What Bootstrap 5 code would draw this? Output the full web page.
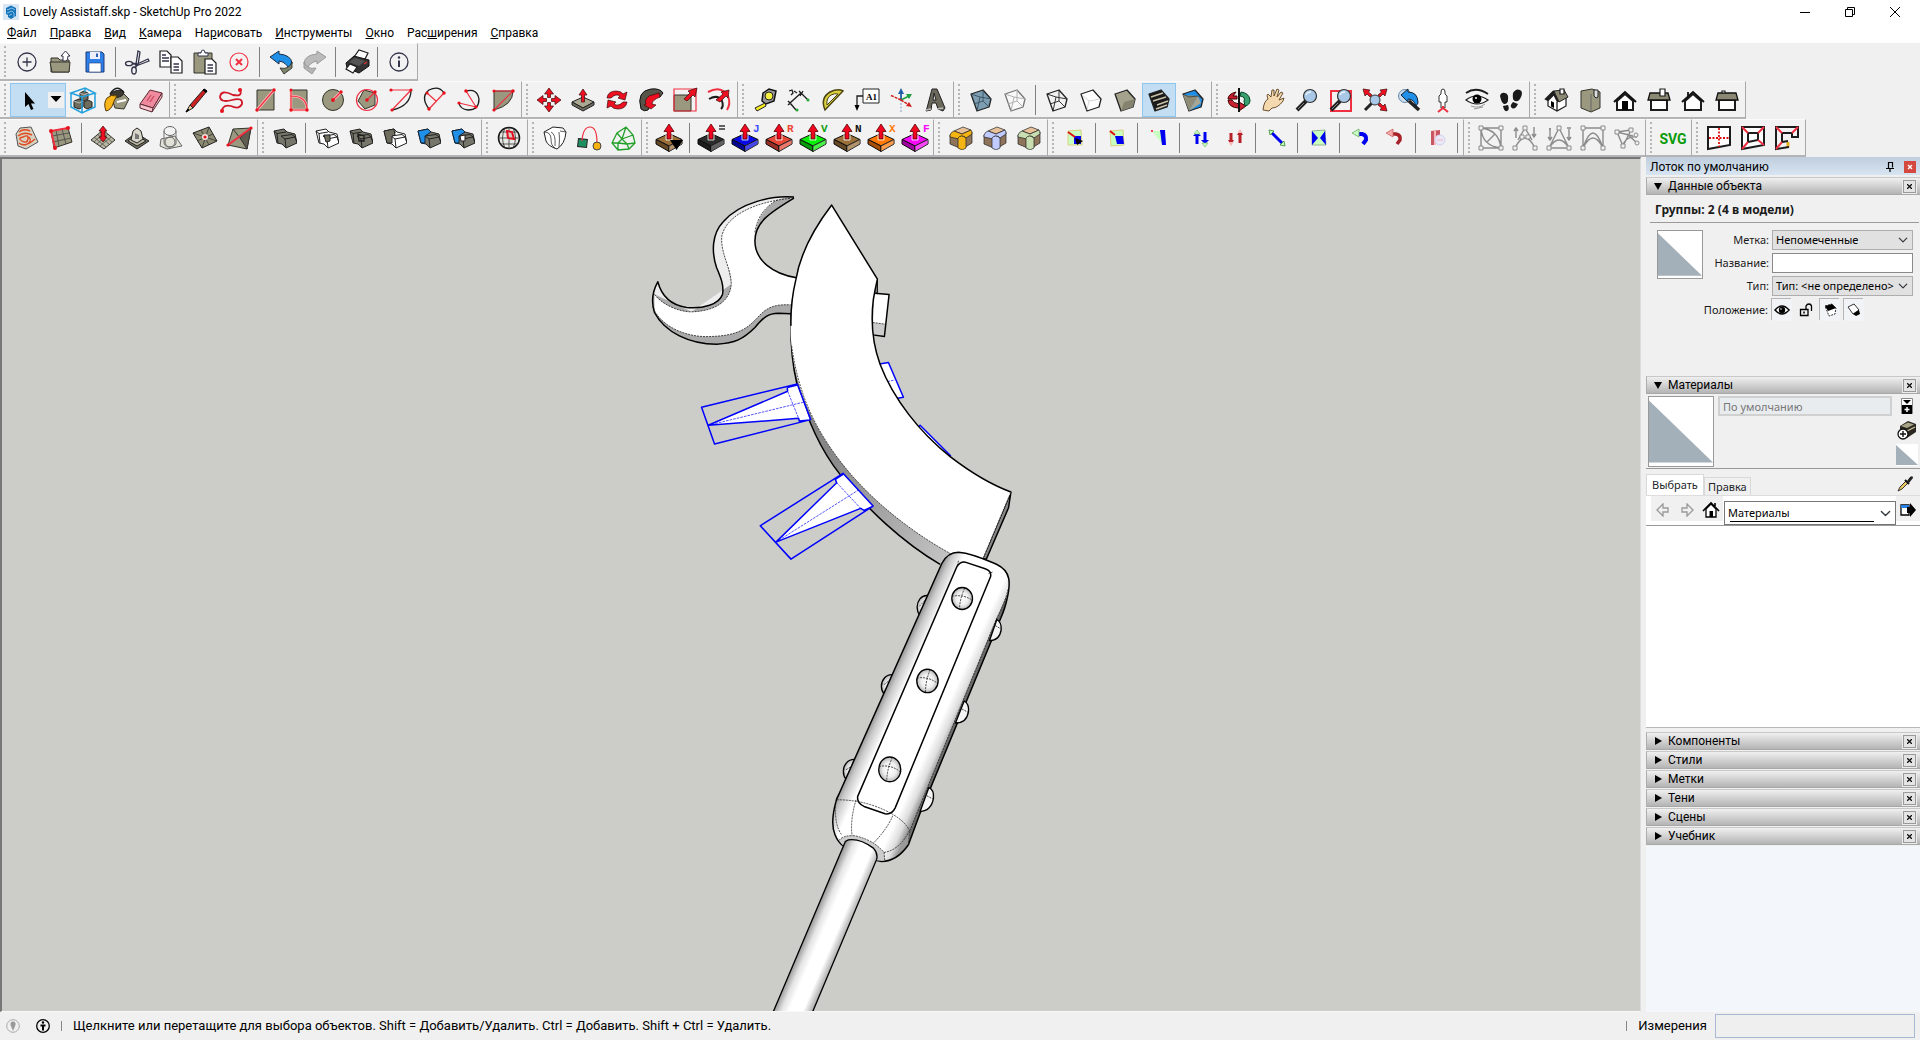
<!DOCTYPE html>
<html lang="ru">
<head>
<meta charset="utf-8">
<meta name="viewport" content="width=device-width, initial-scale=1">
<title>Lovely Assistaff.skp - SketchUp Pro 2022</title>
<link href="https://cdn.jsdelivr.net/npm/bootstrap@5.3.0/dist/css/bootstrap.min.css" rel="stylesheet">
<style>
body{font-family:Roboto,"Open Sans","Noto Sans",sans-serif;font-size:12px;line-height:16px;color:#000;background:#f0f0f0}
.titlebar{height:23px;background:#fff;padding:0 3px 0 3px}
.winbtn{width:45px;height:23px;padding:0;border:0;border-radius:0;line-height:1}
.menubar{height:20px;background:#fff;padding:0 7px;gap:13px}
.menubar a{color:#000;text-decoration:none}
.tools{min-height:114px}
.toolrow{height:38px}
.toolbox{height:38px;padding-right:1px;background:#f2f2f2;border-right:1px solid #a9a9ab;border-bottom:2px solid #b4b4b6;border-top:1px solid #fafafa}
.grip{width:10px;height:31px;padding-left:4px}
.grip::before{content:"";display:block;height:31px;border-left:2px dotted #b4b4b4}
.tb{width:34px;height:34px;padding:0;border:0;border-radius:0;flex:none;display:flex;align-items:center;justify-content:center}
.tb svg{width:24px;height:24px;overflow:visible;display:block}
.tb svg.big{width:34px;height:30px}
.tb.on{background:#c3ddf3;outline:1px solid #8fc6f0;outline-offset:-1px}
.selgrp{width:56px;background:#c3ddf3;outline:1px solid #8fc6f0;outline-offset:-1px}
.selgrp .drop{width:16px;height:16px;background:#f0f0f0;padding:0;border:0;border-radius:0}
.bar{width:8px;height:30px;padding-left:3px;flex:none}
.bar::before{content:"";display:block;height:30px;border-left:1px solid #808080}
svg .k{fill:none;stroke:#1c1c1c;stroke-width:1.3}
svg .n{fill:none;stroke:#33334a;stroke-width:1.3}
svg .r{fill:none;stroke:#f03040;stroke-width:1.2}
svg .fr{fill:#e8101c}
svg .ra{fill:#ee1020;stroke:#3a0a0a;stroke-width:.7}
svg .o{fill:#9b9880;stroke:#33332a;stroke-width:1}
svg .od{fill:#6f6d5e;stroke:#222;stroke-width:1}
svg .w{fill:#fff;stroke:#1c1c1c;stroke-width:1.2}
svg .y{fill:none;stroke:#8c8c8c;stroke-width:1.4}
svg .yb{fill:#f2f2f2;stroke:#8c8c8c;stroke-width:1}
svg .b{fill:#0000f0}
svg .gl{fill:#c8ffc0}
svg .thick{stroke-width:2}
svg .letter{font:700 11px "Liberation Mono",monospace}
.view{background:#cccdc8;border:2px solid #777;border-right:1px solid #ddd;border-bottom:1px solid #f8f8f8;margin-right:5px}
.view svg{display:block;position:absolute;inset:0;width:100%;height:100%}
.ink{fill:none;stroke:#000;stroke-width:4.5;stroke-linejoin:round}
.dash{fill:none;stroke:#222;stroke-width:2.4;stroke-dasharray:6 3}
.blu{fill:none;stroke:#0000ff;stroke-width:4.5;stroke-linejoin:round}
.bdash{fill:none;stroke:#0000f5;stroke-width:2;stroke-dasharray:8 3}
.ink.white,.blu.white{fill:#fff}
.ink.shade{fill:#888}
.tray{width:274px;background:#f0f0f0}
.trayhead{height:18px;background:linear-gradient(#bfcddc,#d7e5f3);padding:1px 4px 0 4px;margin-bottom:2px}
.redx{width:12px;height:12px;background:#d5483f;padding:0;border:0;border-radius:0}
.pin{width:12px;height:12px;padding:0;border:0}
.sec{height:18px;margin-bottom:1px;background:linear-gradient(#f0f0f0,#b4b4b4);border:1px solid #adadad;border-top-color:#c8c8c8;border-bottom-color:#a8a8a8;border-right:0;padding:0 4px 0 7px}
.sec .tri{width:8px;height:8px;margin-right:6px}
.secx{width:13px;height:13px;padding:0;border:1px solid #9a9a9a;outline:1px solid #ececec;border-radius:0;background:#e4e4e4;display:flex;align-items:center;justify-content:center}
.info{height:180px;font-family:"Noto Sans","Open Sans",sans-serif;font-size:11px;color:#1a1a1a}
.bighead{height:27px;line-height:27px;margin:0 1px 7px 4px;padding-left:5px;border-bottom:1px solid #9a9a9a;font-weight:700;font-size:12px}
.props{padding:0 7px 0 11px}
.prow{height:18px;margin-bottom:5px;gap:3px}
.sw{border:1px solid #999;background:#fff;flex:none}
.fld{width:141px;height:20px;border:1px solid #8a8a8a;border-radius:0;padding:0 4px;font-size:11px;line-height:16px;color:#000;min-height:0}
.fld.form-select{background-color:#e1e1e1;border-color:#adadad;background-size:10px;background-position:right 4px center;padding:0 18px 0 3px}
.lab{line-height:20px}
.flags{width:141px;gap:4px}
.ib{width:20px;height:22px;border:0;border-radius:0;padding:0;background:#f1f3f7;box-shadow:-1px -1px 0 #b5b5b5}
.ib.flat{background:none;box-shadow:none}
.ib svg,.mi svg{display:block;margin:auto}
.mat{font-family:"Noto Sans","Open Sans",sans-serif;font-size:11px}
.mattop{height:74px;border-bottom:1px solid #999;padding:1px 2px 0 2px}
.matname{width:1px;height:20px;border:2px solid #d0d0d0;border-radius:0;background:#f0f0f0;padding:0 3px;font-size:11px;line-height:16px;color:#777;min-height:0}
.mi{width:22px;height:20px;padding:0;border:0;border-radius:0}
.mi.tall{height:22px}
.tabs{height:26px;padding-top:5px}
.tabs .tabon,.tabs .taboff{border:1px solid #d9d9d9;border-bottom:0;border-radius:0;font-size:11px;line-height:18px}
.tabs .tabon{background:#fff;height:21px;padding:0 5px 0 5px}
.tabs .taboff{height:18px;background:#f0f0f0;padding:0 3px}
.nav1{height:31px;background:#fff;border-top:1px solid #ddd;border-bottom:1px solid #999;padding-left:5px}
.navb{width:24px;height:25px;padding:0;border:0;border-radius:0;background:#f0f0f0}
.navsel{height:24px;border:1px solid #777;border-radius:0;padding:0 20px 0 3px;font-size:11px;background-size:11px;background-position:right 4px center;min-height:0;color:#000}
.navwrap{margin:5px 0 0 1px}
.navline{left:6px;right:22px;bottom:3px;height:1px;background:#000}
.list{height:202px;background:#fff;margin-bottom:4px;border-bottom:1px solid #b8b8b8}
.rest{background:#f3f7fc}
.status{height:28px;font-size:13px;padding:0 5px 0 6px}
.status .vr{width:1px;height:10px;min-height:0;background:#888;opacity:1;align-self:center;margin:0 11px}
.meas{width:200px;height:24px;border:1px solid #a9b8d2;background:#efefef;border-radius:0;padding:0 4px;min-height:0;font-size:13px}
</style>
<script src="https://cdn.jsdelivr.net/npm/bootstrap@5.3.0/dist/js/bootstrap.bundle.min.js"></script>
</head>
<body class="vh-100 d-flex flex-column overflow-hidden">
<svg width="0" height="0" class="position-absolute" aria-hidden="true">
 <defs>
  <symbol id="plate" viewBox="0 0 34 30"><path d="M4 16.500 17 10.500 30 16.500 17 23Z" fill="currentColor" stroke="#111"/><path d="M4 16.500V21L17 28.500V23Z" fill="currentColor" stroke="#111"/><path d="M4 16.500V21L17 28.500V23Z" opacity=".35"/><path d="M30 16.500V21L17 28.500V23Z" fill="currentColor" stroke="#111"/><path d="M30 16.500V21L17 28.500V23Z" fill="#fff" opacity=".25"/><path d="M17 1 22 8.500H19V16H15V8.500H12Z" fill="#f00820" stroke="#500" stroke-width=".8"/><path d="M14 9V17H20V9" fill="none" stroke="#fff" stroke-width=".8"/></symbol>
  <symbol id="cube" viewBox="0 0 24 24"><path d="M2 6 14 2 22 11 20 19 8 23Z" fill="currentColor" stroke="#222" stroke-width="1.300" stroke-linejoin="round"/></symbol>
  <symbol id="solid" viewBox="0 0 24 24"><path d="M1 5 11 3 14 6 22 8 24 17 13 22 9 18 4 17Z" fill="currentColor" stroke="#222"/><path d="M1 5 4 7.500 13 6M4 7.500 5 17M8 10 19 8.500 22 11 12 13ZM12 13 13 22M22 11 24 17" fill="none" stroke="#222"/></symbol>
  <symbol id="lens" viewBox="0 0 24 24"><path d="M2 22 11 13" stroke="#222" stroke-width="4"/><path d="M3 21 9 15" stroke="#888" stroke-width="1"/><circle cx="15" cy="8" r="6.500" fill="#a9c8e8" stroke="#333" stroke-width="1.200"/><path d="M11 7Q12 4 16 4" fill="none" stroke="#e8f4ff" stroke-width="1.500"/></symbol>
  <symbol id="fillet" viewBox="0 0 24 24"><path d="M1 9 12 3 23 6V17L13 23 1 18Z" fill="#8e745a" stroke="#222" stroke-width=".7"/><path d="M5 5 14 1 22 4 13 8Z" fill="#e8c09a" stroke="#222" stroke-width=".7"/><path d="M1 9Q2 6 5 5L13 8 22 4Q23 5 23 8L17 12Q16 10 13 10 10 10 10 13L1 11Z" fill="currentColor" stroke="#222" stroke-width=".7"/><path d="M9 12Q12 8 17 12V22L13 24 9 22Z" fill="currentColor" stroke="#222" stroke-width=".7"/></symbol>
  <symbol id="tri" viewBox="0 0 40 40" preserveAspectRatio="none"><rect width="40" height="40" fill="#fff"/><path d="M0 2V38H40Z" fill="#a4b0b9"/></symbol>
  <linearGradient id="gh" gradientUnits="userSpaceOnUse" x1="447" y1="421" x2="664" y2="519"><stop offset="0" stop-color="#8f8f8f"/><stop offset=".08" stop-color="#c9c9c9"/><stop offset=".22" stop-color="#fff"/><stop offset=".8" stop-color="#fff"/><stop offset=".92" stop-color="#ddd"/><stop offset="1" stop-color="#999"/></linearGradient>
  <linearGradient id="gr" gradientUnits="userSpaceOnUse" x1="210" y1="1157" x2="310" y2="1200"><stop offset="0" stop-color="#999"/><stop offset=".2" stop-color="#e4e4e4"/><stop offset=".4" stop-color="#fff"/><stop offset=".75" stop-color="#fff"/><stop offset="1" stop-color="#aaa"/></linearGradient>
  <linearGradient id="gb" x1="0" y1="0" x2="1" y2="1"><stop offset="0" stop-color="#777"/><stop offset=".4" stop-color="#888"/><stop offset="1" stop-color="#c6c6c6"/></linearGradient>
  <radialGradient id="gbt"><stop offset="0" stop-color="#fff"/><stop offset=".6" stop-color="#eee"/><stop offset="1" stop-color="#b5b5b5"/></radialGradient>
 </defs>
</svg>

<header class="titlebar d-flex align-items-center">
 <svg width="16" height="16" class="me-1"><rect width="16" height="16" fill="#d8e6f4"/><path d="M3 4 8 1.500 13 4V12L8 15 5 13V11L3 10Z" fill="#1573b8"/><path d="M4 6 9 4 12 6M4 9 9 7 11 9V13M6 11.500 9 10" fill="none" stroke="#8cc4ee"/></svg>
 <span class="me-auto">Lovely Assistaff.skp - SketchUp Pro 2022</span>
 <button class="btn winbtn" aria-label="Свернуть"><svg width="12" height="12"><path d="M1 6.500H11" stroke="#000"/></svg></button>
 <button class="btn winbtn" aria-label="Восстановить"><svg width="12" height="12"><path d="M1.500 3.500H8.500V10.500H1.500ZM3.500 3.500V1.500H10.500V8.500H8.500" fill="none" stroke="#000"/></svg></button>
 <button class="btn winbtn" aria-label="Закрыть"><svg width="12" height="12"><path d="M1 1 11 11M11 1 1 11" stroke="#000"/></svg></button>
</header>
<nav class="menubar d-flex align-items-center">
 <a href="#"><u>Ф</u>айл</a><a href="#"><u>П</u>равка</a><a href="#"><u>В</u>ид</a><a href="#"><u>К</u>амера</a><a href="#">На<u>р</u>исовать</a><a href="#"><u>И</u>нструменты</a><a href="#"><u>О</u>кно</a><a href="#">Рас<u>ш</u>ирения</a><a href="#"><u>С</u>правка</a>
</nav>

<div class="tools">
<div class="toolrow d-flex">
 <div class="toolbox d-flex align-items-center"><span class="grip"></span>
  <button class="btn tb" aria-label="Новый"><svg><circle cx="12" cy="12" r="9" class="n"/><path d="M12 7.500V16.500M7.500 12H16.500" class="n"/></svg></button>
  <button class="btn tb" aria-label="Открыть"><svg><path d="M2 22V8H9L11 10H20V22Z" class="o"/><path d="M1 12H21L20 22H3Z" class="o"/><path d="M14 11V6H12L16.500 1 21 6H19Q19 10 17 11Z" fill="#fff" stroke="#33334a"/></svg></button>
  <button class="btn tb" aria-label="Сохранить"><svg><path d="M3 2H19L21 4V22H3Z" fill="#2f7fe8" stroke="#1c3a78"/><path d="M7 2H17V9H7Z" fill="#eef"/><path d="M13 3.500H15V7H13Z" fill="#2f5fb0"/><path d="M6 13H18V22H6Z" fill="#fff" stroke="#1c3a78" stroke-width=".6"/></svg></button>
  <span class="bar"></span>
  <button class="btn tb" aria-label="Вырезать"><svg><path d="M11 14 13 1 15 2 13 15M10 15 23 9 24 11 11 16" class="n"/><ellipse cx="4" cy="13.500" rx="3.500" ry="2.200" class="n"/><ellipse cx="9" cy="20.500" rx="2.300" ry="3.500" class="n"/><path d="M7 13.500 12 14M10.500 17 12.500 14" class="n thick"/></svg></button>
  <button class="btn tb" aria-label="Копировать"><svg><path d="M1 1H8L12 5V17H1Z" class="w"/><path d="M3 5H7M3 8H10M3 11H10" class="n"/><path d="M12 7H19L23 11V23H12Z" class="w"/><path d="M14.500 14H20M14.500 17H20M14.500 20H20" class="n"/></svg></button>
  <button class="btn tb" aria-label="Вставить"><svg><path d="M1 3H19V23H1Z" class="o"/><path d="M5 6V3H8Q8 0 10 0T12 3H15V6Z" fill="#fff" stroke="#33334a"/><path d="M12 9H19L23 13V24H12Z" class="w"/><path d="M14.500 15H20M14.500 18H20M14.500 21H20" class="n"/></svg></button>
  <button class="btn tb" aria-label="Стереть"><svg><circle cx="12" cy="12" r="9" class="r"/><path d="M9 9 15 15M15 9 9 15" class="r thick"/></svg></button>
  <span class="bar"></span>
  <button class="btn tb" aria-label="Отменить"><svg><path d="M1 7 10 1V4Q22 5 23 13L20 19Q17 12 10 11V14Z" fill="#1f8fe8" stroke="#1a2c44"/><path d="M23 12V18L15 24 11 18Q20 20 23 12Z" fill="#7b8468" stroke="#222" stroke-width=".8"/></svg></button>
  <button class="btn tb" aria-label="Вернуть"><svg><path d="M23 7 14 1V4Q2 5 1 13L4 19Q7 12 14 11V14Z" fill="#bbb" stroke="#999"/><path d="M1 12V18L9 24 13 18Q4 20 1 12Z" fill="#b5b5b5" stroke="#999"/></svg></button>
  <span class="bar"></span>
  <button class="btn tb" aria-label="Печать"><svg><path d="M9 7 14 0 23 3 19 11Z" class="w"/><path d="M1 13 9 6 24 10V16L14 23 2 18Z" fill="#333" stroke="#111"/><path d="M4 12 10 8 20 11 14 16Z" fill="#555"/><path d="M19 14 22 12" stroke="#d33" stroke-width="1.500"/><path d="M1 19 5 14 12 17 8 23Z" class="w"/></svg></button>
  <span class="bar"></span>
  <button class="btn tb" aria-label="Сведения"><svg><circle cx="12" cy="12" r="9" class="n"/><path d="M12 10.500V17" class="n thick"/><circle cx="12" cy="7.500" r="1.200" fill="#33334a"/></svg></button>
 </div>
</div>
<div class="toolrow d-flex">
 <div class="toolbox d-flex align-items-center"><span class="grip"></span>
  <div class="selgrp d-flex align-items-center"><button class="btn tb" aria-label="Выбрать"><svg><path d="M10 4V19L13.500 16 16 22 18.500 21 16 15.500H20Z"/></svg></button><button class="btn drop ms-1" aria-label="Режимы выбора"><svg width="16" height="16" class="d-block"><path d="M2.500 4H13.500L8 10Z"/></svg></button></div>
  <button class="btn tb" aria-label="Компонент"><svg><path d="M9 5 13 3 17 5V11L13 13 9 11ZM3 13 8 11 12 13V19L8 21 3 19ZM13 14 17 12 21 14V19L16 21 13 19Z" class="od"/><path d="M9 5 13 7 17 5M3 13 8 15 12 13" stroke="#bbb" fill="none"/><path d="M0 5 11 9 24 5 14 0ZM0 5V19L11 25 24 19V5M11 9V25M14 0V4" fill="none" stroke="#22a0dd" stroke-width="1.500"/></svg></button>
  <button class="btn tb" aria-label="Заливка"><svg><path d="M6 8 17 4 24 11 19 21 10 20Z" class="o"/><ellipse cx="12" cy="6" rx="7" ry="3.500" transform="rotate(-15 12 6)" fill="#3c3a30" stroke="#222"/><path d="M5 6Q12-5 19 5" class="k"/><path d="M12 14 21 12" stroke="#fff" stroke-width="2"/><path d="M1 23Q-2 15 2 10 6 6 12 8 9 12 8 16 6 22 1 23Z" fill="#f8b418" stroke="#5a3c00"/></svg></button>
  <button class="btn tb" aria-label="Ластик"><svg><path d="M1 16 11 2 23 5 14 20Z" fill="#f08a9e" stroke="#5c2a33"/><path d="M1 16V20L13 24 14 20ZM14 20 23 5V9L13 24" fill="#f8c3cc" stroke="#5c2a33"/><path d="M8 13 12 7M11 14 15 8" stroke="#c84860" stroke-width="1.300"/></svg></button>
 </div>
 <div class="toolbox d-flex align-items-center"><span class="grip"></span>
  <button class="btn tb" aria-label="Линия"><svg><path d="M5 17 19 1 22 3 8 20Z" fill="#cc2020" stroke="#222"/><path d="M5 17 1 24 8 20Z" fill="#e8c89a" stroke="#222"/><path d="M1 24 3 21 4 22ZM18 2 19 1 22 3 21 4.500Z" stroke="#000"/></svg></button>
  <button class="btn tb" aria-label="От руки"><svg><path d="M21 2Q24 9 14 7 2 1 1 9 2 15 13 12 24 9 23 16 20 22 12 18 4 16 3 23" fill="none" stroke="#d01828" stroke-width="1.800"/><circle cx="21" cy="2" r="2" class="fr"/><circle cx="3" cy="23" r="2" class="fr"/></svg></button>
  <button class="btn tb" aria-label="Прямоугольник"><svg><path d="M4 2H21V22H4Z" class="o"/><path d="M4 22 21 2" stroke="#fbb" stroke-width="3"/><path d="M4 22 21 2" class="r"/><circle cx="4" cy="22" r="1.700" class="fr"/><circle cx="21" cy="2" r="1.700" class="fr"/></svg></button>
  <button class="btn tb" aria-label="Повернутый прямоугольник"><svg><path d="M4 2H20V22H4Z" class="o"/><path d="M4 22V2M4 22H20M4 8Q20 8 20 22" fill="none" stroke="#fbb" stroke-width="2.500"/><path d="M4 22V2M4 22H20M4 8Q20 8 20 22" class="r"/><circle cx="4" cy="2" r="1.500" class="fr"/><circle cx="4" cy="22" r="1.700" class="fr"/><circle cx="20" cy="22" r="1.700" class="fr"/></svg></button>
  <button class="btn tb" aria-label="Круг"><svg><circle cx="12" cy="12" r="10.500" class="o"/><path d="M12 12 20 4" stroke="#fbb" stroke-width="3"/><path d="M12 12 20 4" class="r"/><circle cx="12" cy="12" r="1.900" class="fr"/><circle cx="20" cy="4" r="1.700" class="fr"/></svg></button>
  <button class="btn tb" aria-label="Многоугольник"><svg><path d="M9 2 20 5V17L10 21 3 13Z" class="o"/><circle cx="12" cy="12" r="10.500" class="r"/><path d="M12 12 20 4" class="r"/><circle cx="12" cy="12" r="1.800" class="fr"/><circle cx="20" cy="4" r="1.700" class="fr"/></svg></button>
  <button class="btn tb" aria-label="Дуга"><svg><path d="M22 2Q22 18 3 22" class="k"/><path d="M2 2H22L3 22" class="r"/><circle cx="2" cy="2" r="1.600" class="fr"/><circle cx="22" cy="2" r="1.600" class="fr"/><circle cx="3" cy="22" r="1.600" class="fr"/></svg></button>
  <button class="btn tb" aria-label="Дуга по 2 точкам"><svg><path d="M6 21Q-3 9 6 2 16-3 21 5" class="k"/><path d="M6 21 21 5M4 5 13 13" class="r"/><circle cx="6" cy="21" r="1.700" class="fr"/><circle cx="21" cy="5" r="1.700" class="fr"/><circle cx="4" cy="5" r="1.500" class="fr"/></svg></button>
  <button class="btn tb" aria-label="Дуга по 3 точкам"><svg><path d="M9 3Q20 0 22 11 22 22 11 22 3 21 2 15" class="k"/><path d="M19 19 2 15M19 19 9 3" class="r"/><circle cx="2" cy="15" r="1.600" class="fr"/><circle cx="19" cy="19" r="1.600" class="fr"/><circle cx="9" cy="3" r="1.800" class="fr"/></svg></button>
  <button class="btn tb" aria-label="Сектор"><svg><path d="M3 3H22Q22 17 3 22Z" class="o"/><path d="M3 22 22 3H3" class="r"/><circle cx="3" cy="22" r="1.600" class="fr"/><circle cx="22" cy="3" r="1.700" class="fr"/><circle cx="3" cy="3" r="1.500" class="fr"/></svg></button>
 </div>
 <div class="toolbox d-flex align-items-center"><span class="grip"></span>
  <button class="btn tb" aria-label="Переместить"><svg><path d="M12 0 16.500 6H13.500V9.500H10.500V6H7.500ZM12 24 16.500 18H13.500V14.500H10.500V18H7.500ZM0 12 6 7.500V10.500H9.500V13.500H6V16.500ZM24 12 18 7.500V10.500H14.500V13.500H18V16.500Z" class="ra"/></svg></button>
  <button class="btn tb" aria-label="Тяни/Толкай"><svg><path d="M1 14 12 9 23 14 12 20Z" fill="#aaa890" stroke="#222"/><path d="M1 14V17L12 23 23 17V14L12 20Z" class="od"/><path d="M12 1 16 7H13.500V14H10.500V7H8Z" class="ra"/></svg></button>
  <button class="btn tb" aria-label="Повернуть"><svg><path d="M2 10Q3 3 11 3 16 3 18 6L22 4 20 12 13 10 15 8Q11 5 6 10ZM22 14Q21 21 13 21 8 21 6 18L2 20 3 12 11 14 9 16Q13 19 18 14Z" class="ra"/></svg></button>
  <button class="btn tb" aria-label="Ведение"><svg><path d="M2 21Q-3 3 12 1 21 0 24 5L21 9Q14 6 10 10 8 14 11 18L9 22Q5 24 2 21Z" fill="#57544a" stroke="#111"/><path d="M20 5 10 8Q5 12 7 16L5 17 12 21 17 17 13 16Q13 12 21 9Z" class="ra"/></svg></button>
  <button class="btn tb" aria-label="Масштаб"><svg><path d="M1 7H18V23H1Z" class="o"/><path d="M1 1H23V23H1Z" class="r"/><path d="M11 11 17 5 15 3 24 0 22 9 20 7 14 13Z" class="ra"/></svg></button>
  <button class="btn tb" aria-label="Смещение"><svg><path d="M1 4Q14-3 21 8 24 16 20 22" class="r thick"/><path d="M2 11Q11 6 15 13 17 18 14 21" class="k thick"/><path d="M9 12 16 6 14 4 22 2 21 10 19 8 13 14Z" class="ra"/></svg></button>
 </div>
 <div class="toolbox d-flex align-items-center"><span class="grip"></span>
  <button class="btn tb" aria-label="Рулетка"><svg><path d="M10 5 16 1 23 3 21 13 13 16 9 13Z" fill="#999" stroke="#111" stroke-width="1.500"/><circle cx="16" cy="8" r="4" fill="#f4ee40" stroke="#222"/><path d="M12 15 2 20 4 23 13 18Z" fill="#f8ec20" stroke="#222"/></svg></button>
  <button class="btn tb" aria-label="Размеры"><svg><path d="M3 15 14 5M3 15 9 22M14 5 21 12M1 13 5 17M5 13 1 17M12 3 17 8M16 3 13 8M2 3 5 2 6 5 4 7M7 3 10 5" class="k"/><circle cx="10" cy="22" r="1.500" fill="#2a3"/><circle cx="21" cy="12" r="1.500" fill="#2a3"/></svg></button>
  <button class="btn tb" aria-label="Транспортир"><svg><path d="M4 22Q-1 10 9 4 17 0 22 3Z" fill="#dcd040" stroke="#4a4410" stroke-width="1.500"/><path d="M6 17Q5 10 10 7 14 5 17 6Z" fill="#f2f2f2" stroke="#4a4410"/></svg></button>
  <button class="btn tb" aria-label="Текст"><svg><path d="M8 1H24V15H8Z" fill="#fff" stroke="#222"/><path d="M8 8H2V18" class="k"/><path d="M-.5 17H4.500L2 23Z"/><text x="11" y="12" font-size="9" font-family="Liberation Serif" font-weight="700">A1</text></svg></button>
  <button class="btn tb" aria-label="Оси"><svg><path d="M12 24V12" stroke="#7aa0c8" stroke-dasharray="2 1.500"/><path d="M12 12V4" stroke="#2060a8" stroke-width="1.800"/><path d="M9 6 12 0 15 6Z" fill="#2060a8"/><path d="M12 12 20 8" stroke="#20a040" stroke-width="1.500"/><path d="M17 6 23 6 20 11Z" fill="#20a040"/><path d="M12 12 20 17M12 12 1 7" stroke="#d02020" stroke-width="1.500" stroke-dasharray="3 1"/><path d="M17 18 23 19 20 14Z" fill="#d02020"/></svg></button>
  <button class="btn tb" aria-label="3D-текст"><svg><path d="M4 20 9 1 14 1 22 20 20 23 15 21 13 15 9 15 8 22 3 23Z" fill="#6b685c" stroke="#222"/><path d="M10 12 11 5 13 12Z" fill="#eee" stroke="#222"/><path d="M3 22 8 21M14 21 20 20" stroke="#bbb" stroke-width="1.500"/></svg></button>
 </div>
 <div class="toolbox d-flex align-items-center"><span class="grip"></span>
  <button class="btn tb" aria-label="Рентген"><svg><use href="#cube" color="#7d9db3"/><path d="M2 6 11 9 22 11M11 9 8 23M14 2 14 13 20 19M14 13 5 16" fill="none" stroke="#37505f" stroke-width=".9"/></svg></button>
  <button class="btn tb" aria-label="Задние ребра"><svg opacity=".6"><use href="#cube" color="#fff"/><path d="M2 6 11 9 22 11M11 9 8 23M14 2 14 13 20 19M14 13 5 16" fill="none" stroke="#888"/></svg></button>
  <span class="bar"></span>
  <button class="btn tb" aria-label="Каркас"><svg><use href="#cube" color="#f2f2f2"/><path d="M2 6 11 9 22 11M11 9 8 23M14 2 14 13 20 19M14 13 5 16" fill="none" stroke="#222" stroke-width=".9"/></svg></button>
  <button class="btn tb" aria-label="Скрытые линии"><svg><use href="#cube" color="#fff"/><path d="M3 7 10 13 21 11M10 13 8 22" fill="none" stroke="#ccc" stroke-width=".8"/></svg></button>
  <button class="btn tb" aria-label="Тонировка"><svg><use href="#cube" color="#a4a28c"/><path d="M11 14 22 11 20 19 8 23Z" fill="#85836f"/></svg></button>
  <button class="btn tb on" aria-label="Текстуры"><svg><use href="#cube" color="#1a1a1a"/><path d="M4 9 16 5M6 13 19 9M10 17 21 13M9 21 20 17" stroke="#c8c0a8" stroke-width="1.600"/></svg></button>
  <button class="btn tb" aria-label="Монохромный"><svg><use href="#cube" color="#1f90e8"/><path d="M2 7 17 8 8 23Z" fill="#8f8c78"/><path d="M17 8 8 23 20 15Z" fill="#a8a594"/><path d="M2 6 8 9 17 8 22 11" fill="none" stroke="#333" stroke-width=".7"/></svg></button>
 </div>
 <div class="toolbox d-flex align-items-center"><span class="grip"></span>
  <button class="btn tb" aria-label="Орбита"><svg><path d="M9 4Q1 6 1 11H10V8L6 8ZM1 12Q2 20 12 20V23L19 18 12 14V16Q6 15 5 12Z" fill="#c82030" stroke="#400"/><path d="M14 4Q22 5 23 12 23 17 18 18L17 13Q19 9 13 8Z" fill="#3aa070" stroke="#042"/><path d="M12 0V24" stroke="#111" stroke-width="2"/></svg></button>
  <button class="btn tb" aria-label="Панорама"><svg><path d="M2 22Q3 13 7 11 5 7 7 6L10 9 11 2 13 2 13 8 16 1 18 2 16 9 20 4 22 5 18 12 23 10 22 13Q17 20 11 20L8 23Z" fill="#f4d9ae" stroke="#6a5030"/></svg></button>
  <button class="btn tb" aria-label="Лупа"><svg><use href="#lens"/></svg></button>
  <button class="btn tb" aria-label="Окно увеличения"><svg><path d="M2 3H22V23H2Z" class="r thick"/><use href="#lens"/></svg></button>
  <button class="btn tb" aria-label="В размер окна"><svg><path d="M2 22 9 15" stroke="#222" stroke-width="3"/><circle cx="12" cy="12" r="5" fill="#a9c8e8" stroke="#333"/><path d="M0 1 7 2 5.500 4 9 7 7 9 4 6 2 8ZM24 1 17 2 18.500 4 15 7 17 9 20 6 22 8ZM24 23 17 22 18.500 20 15 17 17 15 20 18 22 16Z" class="ra"/></svg></button>
  <button class="btn tb" aria-label="Предыдущий вид"><svg><circle cx="8" cy="8" r="6.500" fill="#c8dcf0" stroke="#6a88a8"/><path d="M12 13 22 22" stroke="#222" stroke-width="3.500"/><path d="M4 7 11 1V4Q21 4 21 15L19 18Q17 11 11 11V14Z" fill="#1f8fe8" stroke="#123"/></svg></button>
  <button class="btn tb" aria-label="Поставить камеру"><svg><path d="M10 4Q10 1 12 1T14 4V6L16 8V14H14V20H10V14H8V8L10 6Z" fill="#fff" stroke="#333"/><path d="M12 18V20M7 24 12 20 17 24" class="r thick"/></svg></button>
  <button class="btn tb" aria-label="Осмотреться"><svg><path d="M1 5Q11-2 23 6" class="k thick"/><path d="M1 12Q11 4 23 12 12 20 1 12Z" class="w"/><circle cx="12" cy="11" r="4.500"/><circle cx="11" cy="10" r="1" fill="#fff"/><path d="M6 18Q14 21 20 16M9 21 18 19" stroke="#999" fill="none"/></svg></button>
  <button class="btn tb" aria-label="Прогулка"><svg><path d="M1 8Q2 4 6 5T9 12Q9 15 6 16T1 8ZM4 18 9 17Q11 22 8 23T4 18ZM14 5Q17 0 21 2T21 11Q19 14 16 13T14 5ZM14 14 19 16Q16 22 13 20T14 14Z" fill="#1a1a1a"/></svg></button>
 </div>
 <div class="toolbox d-flex align-items-center"><span class="grip"></span>
  <button class="btn tb" aria-label="Изо"><svg><path d="M3 10 9 4 21 10V18L12 23 3 18Z" class="w"/><path d="M12 14V23" class="k"/><path d="M9 3 19 2 23 9 14 14Z" fill="#8b8873" stroke="#222"/><path d="M9 3 1 11 3 12 9 6 13 14" class="k thick"/><path d="M15 1H19V6H15Z" class="w"/><path d="M6 13 9 14.500V20L6 18.500Z"/></svg></button>
  <button class="btn tb" aria-label="Сверху"><svg><path d="M2 3 13 1 21 4V20L12 24 2 20Z" class="o"/><path d="M12 6V23" stroke="#666"/><path d="M15 2H19V9L17 10 15 8Z" fill="#ddd" stroke="#222"/></svg></button>
  <button class="btn tb" aria-label="Спереди"><svg><path d="M4 13 12 6 20 13V22H4Z" class="w thick"/><path d="M1 14 12 4 23 14" fill="none" stroke="#111" stroke-width="2"/><path d="M9 13H15V22H9Z"/></svg></button>
  <button class="btn tb" aria-label="Справа"><svg><path d="M4 12H20V22H4Z" class="w thick"/><path d="M3 5H21L23 12H1Z" fill="#8b8873" stroke="#111" stroke-width="1.300"/><path d="M13 1H18V8H13Z" class="w"/></svg></button>
  <button class="btn tb" aria-label="Сзади"><svg><path d="M4 13 12 6 20 13V22H4Z" class="w thick"/><path d="M1 14 12 4 23 14M7 8V4" fill="none" stroke="#111" stroke-width="1.800"/></svg></button>
  <button class="btn tb" aria-label="Слева"><svg><path d="M4 12H20V22H4Z" class="w thick"/><path d="M3 5H21L23 12H1Z" fill="#8b8873" stroke="#111" stroke-width="1.300"/><path d="M7 3H10V5H7Z" class="w"/></svg></button>
 </div>
</div>
<div class="toolrow d-flex">
 <div class="toolbox d-flex align-items-center"><span class="grip"></span>
  <button class="btn tb" aria-label="Из контуров"><svg><path d="M1 8 5 2 16 1 23 16 11 23 3 20Z" fill="#d8d0c0" stroke="#555"/><path d="M4 6Q9 2 15 5M3 10Q9 5 17 9M8 11Q14 8 13 13T7 15 8 11M4 17Q10 22 20 13M14 11Q18 16 10 19" fill="none" stroke="#e04a20" stroke-width="1.400"/></svg></button>
  <button class="btn tb" aria-label="С нуля"><svg><path d="M2 5 19 2 23 16 5 22Z" class="o"/><path d="M7 4 10 20M13 3 17 18M3 10 20 7M4 16 22 12" stroke="#444" stroke-width=".8"/><path d="M6 22 2 5 19 2" class="r thick"/><circle cx="2" cy="5" r="2" class="fr"/><circle cx="19" cy="2" r="2" class="fr"/><circle cx="6" cy="22" r="2" class="fr"/></svg></button>
  <span class="bar"></span>
  <button class="btn tb" aria-label="Рельеф"><svg><path d="M0 14 12 4 24 14 13 23Z" fill="#b8b5a0" stroke="#333"/><path d="M3 16 14 6M6 18 17 8M9 20 20 11M3 11 15 21M6 8 18 18M9 6 21 16" stroke="#444" stroke-width=".7"/><path d="M12 0 16 5H14V11H16L12 16 8 11H10V5H8Z" class="ra"/></svg></button>
  <button class="btn tb" aria-label="Штамп"><svg><path d="M0 15 11 7 24 15 12 23Z" class="od"/><path d="M3 15 11 9 21 15 12 20Z" fill="#b8b5a0" stroke="#222"/><path d="M6 14 8 5 12 2 16 5 18 13 12 17Z" fill="#d8d6c8" stroke="#222"/><path d="M10 7 14 9V13H10Z" fill="#777"/></svg></button>
  <button class="btn tb" aria-label="Проекция"><svg><path d="M2 13 16 10 23 20 8 23 1 20Z" fill="#e2e1d8" stroke="#666"/><ellipse cx="11" cy="5" rx="6" ry="4.500" fill="none" stroke="#666"/><path d="M5 5V17Q6 22 12 21T17 15V5" fill="none" stroke="#777"/><ellipse cx="11" cy="16" rx="5" ry="5" fill="none" stroke="#666"/></svg></button>
  <button class="btn tb" aria-label="Добавить деталь"><svg><path d="M0 7 16 1 24 15 9 22Z" fill="#8d8a72" stroke="#222"/><path d="M0 7 24 15M16 1 9 22M4 15 20 8M8 4 16 19" stroke="#333" stroke-width=".8"/><circle cx="12" cy="11" r="3" fill="#f4e8e0"/><circle cx="12" cy="11" r="1.600" class="fr"/></svg></button>
  <button class="btn tb" aria-label="Перевернуть ребро"><svg><path d="M6 3 24 2 20 23 1 19Z" class="o"/><path d="M6 3 13 12 24 2 20 23 13 12" fill="#5f5d50" stroke="#333"/><path d="M1 19 24 2" class="r thick"/><circle cx="1" cy="19" r="1.600" class="fr"/><circle cx="24" cy="2" r="1.600" class="fr"/></svg></button>
 </div>
 <div class="toolbox d-flex align-items-center"><span class="grip"></span>
  <button class="btn tb" aria-label="Оболочка"><svg><use href="#solid" color="#77766a"/></svg></button>
  <span class="bar"></span>
  <button class="btn tb" aria-label="Пересечение"><svg><use href="#solid" color="#fff"/><path d="M9 9H15V15L11 16Z" class="od"/></svg></button>
  <button class="btn tb" aria-label="Объединение"><svg><use href="#solid" color="#77766a"/><path d="M9 8 15 10V15L10 15Z" class="k"/></svg></button>
  <button class="btn tb" aria-label="Вычесть"><svg><use href="#solid" color="#fff"/><path d="M1 5 11 3 12 9 9 10V17L4 17Z" class="od"/></svg></button>
  <button class="btn tb" aria-label="Обрезать"><svg><use href="#solid" color="#77766a"/><path d="M1 5 11 3 14 6 8 10V17L4 17Z" fill="#1f8fe8" stroke="#123"/></svg></button>
  <button class="btn tb" aria-label="Разделить"><svg><use href="#solid" color="#77766a"/><path d="M1 5 11 3 14 6 8 10V17L4 17Z" fill="#1f8fe8" stroke="#123"/><path d="M9 10 14 9V15L10 15Z" fill="#fff" stroke="#222"/></svg></button>
 </div>
 <div class="toolbox d-flex align-items-center"><span class="grip"></span>
  <button class="btn tb" aria-label="Геолокация"><svg><circle cx="12" cy="12" r="10.500" fill="#e8e8e4" stroke="#111" stroke-width="1.500"/><path d="M1 12H23M3 6H21M3 18H21M12 1V23M8 2Q3 12 8 22M16 2Q21 12 16 22" fill="none" stroke="#333" stroke-width=".8"/><path d="M10 5 15 6 17 13 11 12Z" fill="#d8c8c0" stroke="#e01020" stroke-width="2"/></svg></button>
 </div>
 <div class="toolbox d-flex align-items-center"><span class="grip"></span>
  <button class="btn tb" aria-label="Сетка 1"><svg><path d="M1 6 10 1 20 2 23 6Q22 18 14 23 5 20 3 15Z" fill="#fff" stroke="#222"/><path d="M1 6Q8 6 8 13T12 22M8 6Q13 8 12 20M16 6Q17 12 16 21M17 5 23 6" fill="none" stroke="#333" stroke-width=".8"/></svg></button>
  <button class="btn tb" aria-label="Сетка 2"><svg><path d="M1 13H10V21H1Z" fill="#1c9060" stroke="#222" transform="rotate(6 5 17)"/><path d="M5 15Q6 1 13 1T20 17" class="r"/><circle cx="20" cy="20" r="4" fill="#f6b010" stroke="#444"/></svg></button>
  <button class="btn tb" aria-label="Сетка 3"><svg><path d="M1 17 6 7 15 1 22 9 24 17 18 23 7 24ZM6 7 11 13 15 1M11 13 22 9M11 13 7 17 1 17M7 17 7 24M11 13 16 18 24 17M16 18 18 23M7 17 16 18" fill="none" stroke="#20a028" stroke-width="1.300"/></svg></button>
 </div>
 <div class="toolbox d-flex align-items-center"><span class="grip"></span>
  <button class="btn tb" aria-label="Joint Push Pull"><svg class="big"><use href="#plate" color="#9a7038"/><path d="M18 17H31L24.500 27Z"/></svg></button>
  <span class="bar"></span>
  <button class="btn tb" aria-label="Повтор"><svg class="big"><use href="#plate" color="#2c2c2c"/><path d="M25 3H31M25 6H31" stroke="#333" stroke-width="1.600"/></svg></button>
  <button class="btn tb" aria-label="J"><svg class="big"><use href="#plate" color="#0808e8"/><text x="25" y="9" class="letter" fill="#4050ff">J</text></svg></button>
  <button class="btn tb" aria-label="R"><svg class="big"><use href="#plate" color="#e84838"/><text x="25" y="9" class="letter" fill="#f04838">R</text></svg></button>
  <button class="btn tb" aria-label="V"><svg class="big"><use href="#plate" color="#08f008"/><text x="25" y="9" class="letter" fill="#10a010">V</text></svg></button>
  <button class="btn tb" aria-label="N"><svg class="big"><use href="#plate" color="#9a7038"/><text x="25" y="9" class="letter" fill="#111">N</text></svg></button>
  <button class="btn tb" aria-label="X"><svg class="big"><use href="#plate" color="#ff7808"/><text x="25" y="9" class="letter" fill="#ff7808">X</text></svg></button>
  <button class="btn tb" aria-label="F"><svg class="big"><use href="#plate" color="#f808f8"/><text x="25" y="9" class="letter" fill="#f808f8">F</text></svg></button>
 </div>
 <div class="toolbox d-flex align-items-center"><span class="grip"></span>
  <button class="btn tb" aria-label="Скругление"><svg><use href="#fillet" color="#f4b414"/></svg></button>
  <button class="btn tb" aria-label="Острый угол"><svg><use href="#fillet" color="#c0ccff"/></svg></button>
  <button class="btn tb" aria-label="Фаска"><svg><use href="#fillet" color="#c8deb0"/></svg></button>
 </div>
 <div class="toolbox d-flex align-items-center"><span class="grip"></span>
  <button class="btn tb" aria-label="Curviloft 1"><svg><path d="M5 5 18 4 19 19 5 19Z" class="gl" stroke="#ddd080"/><path d="M11 10H18V18H11Z" class="b"/><path d="M5 6 12 11" stroke="#e01010" stroke-width="2"/><path d="M12 12 20 15 14 19Z"/></svg></button><span class="bar"></span>
  <button class="btn tb" aria-label="Curviloft 2"><svg><path d="M5 5 18 4 19 19 6 20Z" class="gl" stroke="#ddd080"/><path d="M10 10 18 10 19 18 12 18Z" class="b"/><path d="M5 5 10 9" stroke="#e01010" stroke-width="2"/></svg></button><span class="bar"></span>
  <button class="btn tb" aria-label="Curviloft 3"><svg><path d="M5 5 16 5V19Z" class="gl"/><path d="M13 4H18L19 19H15Z" class="b"/><circle cx="5" cy="5" r="1" class="fr"/></svg></button><span class="bar"></span>
  <button class="btn tb" aria-label="Вверх-вниз"><svg><path d="M8 6 12 10H9.500V18H6.500V10H4ZM16 18 12 14H14.500V6H17.500V14H20Z" class="b"/><path d="M8 4 11 8H5ZM16 21 13 17H19Z" class="gl" stroke="#6a6" stroke-width=".6"/></svg></button>
  <button class="btn tb" aria-label="Вниз-вверх"><svg><path d="M8 19 5 14H6.500V7H9.500V14H11ZM17 4 20 9H18.500V17H15.500V9H14Z" fill="#b82028"/><path d="M8 20 5.500 16H10.500ZM17 3 19.500 7H14.500Z" fill="#f8b8b8"/></svg></button><span class="bar"></span>
  <button class="btn tb" aria-label="Растянуть"><svg><path d="M7 7 17 17" stroke="#0000f0" stroke-width="3"/><path d="M4 4 9 5 5 9ZM20 20 15 19 19 15Z" class="gl" stroke="#383" stroke-width=".8"/></svg></button><span class="bar"></span>
  <button class="btn tb" aria-label="Скрутить"><svg><path d="M5 5 18 4 19 19 5 19Z" class="gl" stroke="#686" stroke-width=".6"/><path d="M5 5 11 12 5 19ZM18 5 13 12 19 19Z" class="b"/></svg></button><span class="bar"></span>
  <button class="btn tb" aria-label="Поворот вправо"><svg><path d="M9 8H13Q18 9 17 14L14 18" fill="none" stroke="#0000f0" stroke-width="4"/><path d="M3 7 10 3V11Z" class="gl" stroke="#6a6" stroke-width=".8"/></svg></button>
  <button class="btn tb" aria-label="Поворот влево"><svg><path d="M9 8H13Q18 9 17 14L14 18" fill="none" stroke="#a82028" stroke-width="3.500"/><path d="M3 7 10 3V11Z" fill="#f8a8a8" stroke="#c66" stroke-width=".8"/></svg></button><span class="bar"></span>
  <button class="btn tb" aria-label="Профиль"><svg opacity=".8"><path d="M6 5V19H10V13Q10 9 15 9V4Z" fill="#c03040"/><path d="M10 5V19" stroke="#faa" stroke-width="2"/><circle cx="15" cy="14" r="5" fill="#e8e8fa" stroke="#c8c8ee"/><path d="M12 14H18" stroke="#f6a0b0"/></svg></button><span class="bar"></span>
 </div>
 <div class="toolbox d-flex align-items-center"><span class="grip"></span>
  <button class="btn tb" aria-label="Кривая 1"><svg><path d="M2 2H22V22H2ZM2 2Q3 20 22 22M2 2Q20 4 22 22M8 16 16 8" class="y"/><path d="M0 0H4V4H0ZM20 0H24V4H20ZM0 20H4V24H0ZM20 20H24V24H20Z" class="yb"/></svg></button>
  <button class="btn tb" aria-label="Кривая 2"><svg><path d="M2 22Q12 2 22 22M5 14 12 2 19 14M3 2V12M1 5 3 2 5 5M21 1V11M19 8 21 11 23 8" class="y"/><path d="M10 0H14V4H10ZM0 20H4V24H0ZM20 20H24V24H20ZM7 9H11V13H7ZM13 9H17V13H13Z" class="yb"/></svg></button>
  <button class="btn tb" aria-label="Кривая 3"><svg><path d="M2 22Q12 6 22 22M2 22 12 2 22 22M2 22H22M2 3H4M3 2V14M1 11 3 14 5 11M20 2H24M22 3V14M20 11 22 14 24 11" class="y"/><path d="M10 0H14V4H10ZM0 20H4V24H0ZM20 20H24V24H20Z" class="yb"/></svg></button>
  <button class="btn tb" aria-label="Кривая 4"><svg><path d="M2 22V2H22V22M2 22Q12-8 22 22M2 22Q12 2 22 22" class="y"/><path d="M0 0H4V4H0ZM20 0H24V4H20ZM0 20H4V24H0ZM20 20H24V24H20Z" class="yb"/></svg></button>
  <button class="btn tb" aria-label="Кривая 5"><svg><path d="M2 6 16 4 8 20 2 6 18 10M8 20Q10 10 22 11M12 8 22 17" class="y"/><circle cx="21" cy="9" r="2" class="yb"/><circle cx="22" cy="17" r="2" class="yb"/><path d="M0 4H4V8H0ZM14 2H18V6H14ZM6 18H10V22H6Z" class="yb"/></svg></button>
 </div>
 <div class="toolbox d-flex align-items-center"><span class="grip"></span>
  <button class="btn tb" aria-label="SVG"><svg><text x="12" y="18" text-anchor="middle" font-size="14" font-weight="700" font-family="Roboto" fill="#0a9a0a">SVG</text></svg></button>
 </div>
 <div class="toolbox d-flex align-items-center"><span class="grip"></span>
  <button class="btn tb" aria-label="Разрез 1"><svg><path d="M1 1H23V19L12 21 1 23Z" class="w thick"/><path d="M12 2V21M2 12H23" stroke="#e01010" stroke-width="1.800" stroke-dasharray="2 1.500"/></svg></button>
  <button class="btn tb" aria-label="Разрез 2"><svg><path d="M1 1H23V19L12 21 1 23Z" fill="#fff"/><path d="M1 1H23V19L12 21 1 23ZM7 7H17V14L7 16Z" class="k thick"/><path d="M1 1 7 7M23 1 17 7M23 19 17 14M1 23 7 16" class="r thick"/></svg></button>
  <button class="btn tb" aria-label="Разрез 3"><svg><path d="M13 16V21" stroke="#e8b020" stroke-width="3"/><path d="M14 21 1 23V1H23V11H17V7H7V16L13 15" class="k thick"/><path d="M1 1 7 7M23 1 17 7M1 23 7 16" class="r thick"/></svg></button>
 </div>
</div>
</div>

<div class="d-flex flex-grow-1 overflow-hidden">
 <main class="view flex-grow-1 position-relative overflow-hidden">
  <svg viewBox="2 160 1638 851" preserveAspectRatio="xMidYMid slice" role="img" aria-label="Модель посоха">
   <g transform="translate(640 180) scale(.33333)">
    <path d="M462 54C400 48 300 70 250 128 215 165 215 220 230 265 245 300 252 320 248 345 238 375 190 390 140 385 95 378 65 350 54 308 36 340 36 375 44 400 75 460 150 495 230 495 285 492 310 480 345 445 370 415 385 402 415 402L452 404 470 296C400 285 345 245 345 185 345 130 390 100 462 57Z" fill="#aaa"/>
    <path d="M440 54C400 50 300 70 250 128 215 165 215 220 230 265 245 300 252 320 248 345 238 375 190 390 140 385 95 378 65 350 54 308 44 325 40 345 44 345L155 398 274 315 246 170 412 63Z" fill="#ededed"/>
    <path d="M412 63C340 75 260 110 246 170 240 220 275 270 274 315 270 365 230 395 155 398 110 398 60 370 44 345L44 395C75 450 150 475 210 472 290 470 320 450 350 418 380 385 400 375 452 377L470 296C400 285 345 245 345 185 345 120 380 80 412 63Z" fill="#fff"/>
    <path d="M462 54C400 48 300 70 250 128 215 165 215 220 230 265 245 300 252 320 248 345 238 375 190 390 140 385 95 378 65 350 54 308 36 340 36 375 44 400 75 460 150 495 230 495 285 492 310 480 345 445 370 415 385 402 415 402L452 404M470 296C400 285 345 245 345 185 345 130 390 100 462 57" class="ink"/>
    <path d="M450 58C340 70 260 110 246 170 240 220 275 270 274 315 270 365 230 395 155 398 110 398 60 370 44 345M44 395C75 450 150 475 210 472 290 470 320 450 350 418 380 385 400 375 452 377M345 160C352 110 380 80 412 63" class="dash"/>
    <path d="M453 400C450 500 458 560 470 610 500 720 540 810 600 885 680 990 790 1090 900 1155L940 1120 600 800Z" fill="url(#gb)"/>
    <path d="M453 400C450 500 458 560 470 610 500 720 540 810 600 885 680 990 790 1090 900 1155" class="ink"/>
    <path d="M1112 938 1105 985 1038 1140 1028 1136Z" class="ink shade"/>
    <path d="M703 342 747 346 733 472 698 467Z" fill="#fff"/><path d="M698 430 736 435 733 472 700 467Z" fill="#ccc"/><path d="M703 342 747 346 733 472 698 467" class="ink"/><path d="M698 430 736 435" class="dash"/>
    <path d="M712 300V340L700 345Z" fill="#888" stroke="#000" stroke-width="3"/>
    <path d="M718 554 745 550 790 654 768 658Z" fill="#fff"/><path d="M718 554 745 550 790 654 768 658" class="blu"/><path d="M742 607 764 602" class="bdash"/>
    <path d="M833 744 840 738 932 830" class="blu white"/>
    <path d="M575 78 712 300Q705 330 700 360C690 440 700 500 720 555 760 660 840 760 930 832 990 878 1050 915 1112 938L1028 1138 930 1122C800 1050 680 950 600 845 520 740 475 640 460 540 450 480 445 400 468 300 480 230 520 150 575 78Z" fill="#fff"/>
    <path d="M453 440C452 400 456 350 468 300 480 230 520 150 575 78L712 300Q705 330 700 360C690 440 700 500 720 555 760 660 840 760 930 832 990 878 1050 915 1112 938" class="ink"/>
    <path d="M455 500C475 640 520 740 600 845 680 950 800 1050 930 1122M1112 938 1028 1138" class="dash"/>
    <path d="M205 738 443 636 442 625 472 617 510 722 478 725 476 717Z" fill="#fff"/>
    <path d="M185 684 472 614 512 721 224 794ZM205 738 443 636M205 738 476 717M442 625 443 636M476 717 478 725 510 722M442 625 472 617" class="blu"/>
    <path d="M205 738 493 668M443 636 476 717" class="bdash"/>
    <path d="M408 1088 590 910 586 900 609 885 699 980 672 993 662 987Z" fill="#fff"/>
    <path d="M361 1039 609 882 699 980 453 1139ZM408 1088 590 910 586 900 609 885M408 1088 662 987 672 993 699 980" class="blu"/>
    <path d="M408 1088 655 932M590 910 662 987" class="bdash"/>
   </g>
   <g transform="translate(740 540) scale(.33333)">
    <g fill="url(#gbt)" stroke="#000" stroke-width="4"><ellipse cx="560" cy="203" rx="29" ry="35"/><ellipse cx="455" cy="440" rx="31" ry="35"/><ellipse cx="342" cy="695" rx="32" ry="36"/></g>
    <path d="M538 200 555 182M432 435 450 420M318 690 338 678" class="dash"/>
    <path d="M605 72Q622 38 655 38C700 42 740 62 770 75 812 95 812 130 800 180Q795 205 780 240L540 820 505 915Q470 965 425 965L400 960 312 920Q295 910 285 885 270 850 288 785Q290 775 296 765Z" fill="url(#gh)"/>
    <path d="M800 165 755 270 510 870 505 915 540 820 780 240Q798 200 800 165Z" fill="#6a6a6a"/>
    <path d="M605 72Q622 38 655 38C700 42 740 62 770 75 812 95 812 130 800 180Q795 205 780 240L540 820 505 915Q470 965 425 965L400 960 312 920Q295 910 285 885 270 850 288 785Q290 775 296 765Z" class="ink"/>
    <path d="M803 150Q795 190 770 235L508 875 505 915" class="dash"/>
    <g fill="#f4f4f4" stroke="#000" stroke-width="4"><path d="M770 240Q784 248 783 270 778 303 748 303Z"/><path d="M672 484Q687 492 685 515 680 550 646 550Z"/><path d="M566 744Q582 750 580 775 574 813 540 815Z"/></g>
    <path d="M765 258 782 268M665 508 684 518M560 768 579 778" class="dash"/>
    <path d="M650 82Q660 66 675 68L735 88Q755 95 751 112L465 805Q455 825 435 822L372 800Q350 790 353 770Z" class="ink white"/>
    <g fill="url(#gbt)" stroke="#000" stroke-width="4"><ellipse cx="666" cy="177" rx="31" ry="33"/><ellipse cx="562" cy="424" rx="32" ry="35"/><ellipse cx="449" cy="689" rx="33" ry="37"/></g>
    <path d="M636 170Q670 164 696 182M674 145Q658 180 658 210M531 415Q566 410 593 432M570 390Q556 425 556 458M417 680Q455 674 481 697M457 653Q440 690 440 725M655 64 650 82M757 98 745 102" class="dash"/>
    <path d="M290 780Q380 780 455 822 495 845 508 872M348 780Q330 840 336 888M458 828Q440 870 398 912M286 800Q285 860 305 885M508 872Q480 930 432 938" class="dash"/>
    <path d="M297 902Q310 885 345 888 400 900 432 938L434 962 410 962 312 920Z" fill="#ccc"/>
    <path d="M297 902Q310 885 345 888 400 900 432 938L434 962" class="dash"/>
    <path d="M316 905 98 1420H216L410 958Q414 940 400 925 360 895 325 900Z" fill="url(#gr)" stroke="#000" stroke-width="4"/>
   </g>
  </svg>
 </main>

 <aside class="tray flex-shrink-0 d-flex flex-column">
  <div class="trayhead d-flex align-items-center"><span class="me-auto">Лоток по умолчанию</span>
   <button class="btn pin d-flex me-2" aria-label="Закрепить"><svg width="12" height="12"><path d="M4 1.500H8.500V6.500M4.500 1V7M2 7.500H10M6 7V11" fill="none" stroke="#000" stroke-width="1.200"/></svg></button>
   <button class="btn redx d-flex" aria-label="Закрыть лоток"><svg width="12" height="12"><path d="M4 4 8 8M8 4 4 8" stroke="#fff" stroke-width="1.400"/></svg></button></div>
  <div class="sec d-flex align-items-center"><svg class="tri"><path d="M0 1H8L4 8Z"/></svg><span class="me-auto">Данные объекта</span><button class="btn secx" aria-label="Закрыть Данные объекта"><svg width="5" height="5"><path d="M0 0 5 5M5 0 0 5" stroke="#111" stroke-width="1.300"/></svg></button></div>
  <div class="info">
   <div class="bighead">Группы: 2 (4 в модели)</div>
   <div class="props d-flex justify-content-between align-items-start">
    <svg class="sw d-block" width="46" height="49"><use href="#tri" width="44" height="47"/></svg>
    <div>
     <div class="prow d-flex justify-content-end"><label class="lab" for="f1">Метка:</label><select id="f1" class="form-select fld"><option>Непомеченные</option></select></div>
     <div class="prow d-flex justify-content-end"><label class="lab" for="f2">Название:</label><input id="f2" class="form-control fld"></div>
     <div class="prow d-flex justify-content-end"><label class="lab" for="f3">Тип:</label><select id="f3" class="form-select fld"><option>Тип: &lt;не определено&gt;</option></select></div>
     <div class="d-flex justify-content-end align-items-center gap-1"><span>Положение:</span>
      <div class="flags d-flex">
      <button class="btn ib" aria-label="Видимость"><svg width="16" height="14"><path d="M1 7Q8-1 15 7 8 15 1 7Z" fill="#fff" stroke="#000" stroke-width="1.500"/><circle cx="8" cy="7" r="3.200"/><circle cx="7" cy="6" r=".8" fill="#fff"/></svg></button>
      <button class="btn ib flat" aria-label="Блокировка"><svg width="14" height="14"><path d="M1.500 6.500H9V12.500H1.500ZM7 6V3Q8 1 10 1T12.500 3V8" fill="none" stroke="#000" stroke-width="1.300"/><path d="M5 8.500V10.500" stroke="#000" stroke-width="1.500"/></svg></button>
      <button class="btn ib" aria-label="Отбрасывать тени"><svg width="14" height="14"><path d="M2 3 9 1 13 5 12 11 6 13 4 8Z" fill="#fff" stroke="#333" stroke-dasharray="2 1"/><path d="M2 3 9 1 13 5 5 8Z"/></svg></button>
      <button class="btn ib" aria-label="Получать тени"><svg width="14" height="14"><path d="M1 4 7 1 12 7 6 11Z" fill="#fff" stroke="#333"/><path d="M6 11 12 7 13 11 9 13Z"/></svg></button>
      </div>
     </div>
    </div>
   </div>
  </div>
  <div class="sec d-flex align-items-center"><svg class="tri"><path d="M0 1H8L4 8Z"/></svg><span class="me-auto">Материалы</span><button class="btn secx" aria-label="Закрыть Материалы"><svg width="5" height="5"><path d="M0 0 5 5M5 0 0 5" stroke="#111" stroke-width="1.300"/></svg></button></div>
  <div class="mat">
   <div class="mattop d-flex">
    <svg class="sw d-block" width="66" height="71"><use href="#tri" width="64" height="69"/></svg>
    <input class="form-control matname ms-1 flex-grow-1" value="По умолчанию" aria-label="Имя материала" disabled>
    <div class="d-flex flex-column ms-1 gap-1">
     <button class="btn mi" aria-label="Дополнительная область"><svg width="12" height="18"><path d="M.5 1.500H11.500V16.500H.5Z" fill="#fff" stroke="#888"/><path d="M2 3H10L6 7ZM1 8H11V17H1Z"/><path d="M6 10V15M3.500 12.500H8.500" stroke="#fff" stroke-width="1.500"/></svg></button>
     <button class="btn mi" aria-label="Создать материал"><svg width="20" height="20"><path d="M3 6 11 1 19 4V12L10 18 3 14Z" fill="#2a2820"/><path d="M4 6 11 2.500 17 4.500 10 8Z" fill="#a8a488"/><path d="M10 11 18 7" stroke="#c8c4a0" stroke-width="1.300"/><circle cx="6" cy="14" r="5" fill="#fff" stroke="#111" stroke-width="1.300"/><path d="M6 11V17M3 14H9" stroke="#111" stroke-width="1.400"/></svg></button>
     <button class="btn mi tall" aria-label="По умолчанию"><svg width="22" height="22"><use href="#tri" width="22" height="22"/></svg></button>
    </div>
   </div>
   <div class="tabs d-flex align-items-end" role="tablist">
    <button class="btn tabon" role="tab">Выбрать</button><button class="btn taboff" role="tab">Правка</button>
    <button class="btn mi ms-auto me-1 align-self-start" aria-label="Пипетка"><svg width="18" height="18"><path d="M2 16 4 12 10 6 12 8 6 14Z" fill="#e8c860" stroke="#333"/><path d="M9 5 13 9" stroke="#111" stroke-width="2"/><path d="M11 6 14 2Q17 0 17 3L13 8Z" fill="#222"/></svg></button>
   </div>
   <div class="nav1 d-flex align-items-start">
    <button class="btn navb" aria-label="Назад"><svg width="14" height="14"><path d="M1 7 7 1V5H12V9H7V13Z" fill="none" stroke="#999" stroke-width="1.300"/></svg></button><button class="btn navb" aria-label="Вперед"><svg width="14" height="14"><path d="M13 7 7 1V5H2V9H7V13Z" fill="none" stroke="#999" stroke-width="1.300"/></svg></button><button class="btn navb" aria-label="В модели"><svg width="18" height="18"><path d="M4 8V16H14V8L9 3Z" fill="#fff" stroke="#000" stroke-width="1.300"/><path d="M1 10 9 2 17 10M13 2V5" fill="none" stroke="#000" stroke-width="1.600"/><path d="M7.500 10H11V16H7.500Z"/></svg></button>
    <div class="navwrap position-relative flex-grow-1"><select class="form-select navsel" aria-label="Коллекция"><option>Материалы</option></select><span class="navline position-absolute"></span></div>
    <button class="btn navb" aria-label="Подробнее"><svg width="16" height="16"><path d="M1 3H9V13H1Z" fill="#fff" stroke="#000" stroke-width="1.300"/><path d="M1 3H9V6H1Z" fill="#2a80e0"/><path d="M7 5H10V1L16 8 10 15V11H7Z"/></svg></button>
   </div>
   <div class="list"></div>
  </div>
  <div class="sec d-flex align-items-center"><svg class="tri"><path d="M1 0V8L8 4Z"/></svg><span class="me-auto">Компоненты</span><button class="btn secx" aria-label="Закрыть Компоненты"><svg width="5" height="5"><path d="M0 0 5 5M5 0 0 5" stroke="#111" stroke-width="1.300"/></svg></button></div>
  <div class="sec d-flex align-items-center"><svg class="tri"><path d="M1 0V8L8 4Z"/></svg><span class="me-auto">Стили</span><button class="btn secx" aria-label="Закрыть Стили"><svg width="5" height="5"><path d="M0 0 5 5M5 0 0 5" stroke="#111" stroke-width="1.300"/></svg></button></div>
  <div class="sec d-flex align-items-center"><svg class="tri"><path d="M1 0V8L8 4Z"/></svg><span class="me-auto">Метки</span><button class="btn secx" aria-label="Закрыть Метки"><svg width="5" height="5"><path d="M0 0 5 5M5 0 0 5" stroke="#111" stroke-width="1.300"/></svg></button></div>
  <div class="sec d-flex align-items-center"><svg class="tri"><path d="M1 0V8L8 4Z"/></svg><span class="me-auto">Тени</span><button class="btn secx" aria-label="Закрыть Тени"><svg width="5" height="5"><path d="M0 0 5 5M5 0 0 5" stroke="#111" stroke-width="1.300"/></svg></button></div>
  <div class="sec d-flex align-items-center"><svg class="tri"><path d="M1 0V8L8 4Z"/></svg><span class="me-auto">Сцены</span><button class="btn secx" aria-label="Закрыть Сцены"><svg width="5" height="5"><path d="M0 0 5 5M5 0 0 5" stroke="#111" stroke-width="1.300"/></svg></button></div>
  <div class="sec d-flex align-items-center"><svg class="tri"><path d="M1 0V8L8 4Z"/></svg><span class="me-auto">Учебник</span><button class="btn secx" aria-label="Закрыть Учебник"><svg width="5" height="5"><path d="M0 0 5 5M5 0 0 5" stroke="#111" stroke-width="1.300"/></svg></button></div>
  <div class="rest flex-grow-1"></div>
 </aside>
</div>

<footer class="status d-flex align-items-center">
 <svg width="14" height="16"><circle cx="7" cy="8" r="6.300" fill="none" stroke="#aaa"/><path d="M7 13 4.500 7Q4 3.500 7 3.500T9.500 7Z" fill="#999"/></svg>
 <svg width="14" height="16" class="ms-3"><circle cx="7" cy="8" r="6.300" fill="none" stroke="#000" stroke-width="1.300"/><circle cx="7" cy="4.500" r="1.200"/><path d="M4.500 6.500H9.500V8.500H8V12.500H6V8.500H4.500Z"/></svg>
 <span class="vr"></span>
 <span class="me-auto">Щелкните или перетащите для выбора объектов. Shift = Добавить/Удалить. Ctrl = Добавить. Shift + Ctrl = Удалить.</span>
 <span class="vr"></span>
 <label class="me-2" for="meas">Измерения</label><input id="meas" class="form-control meas">
</footer>
</body>
</html>
